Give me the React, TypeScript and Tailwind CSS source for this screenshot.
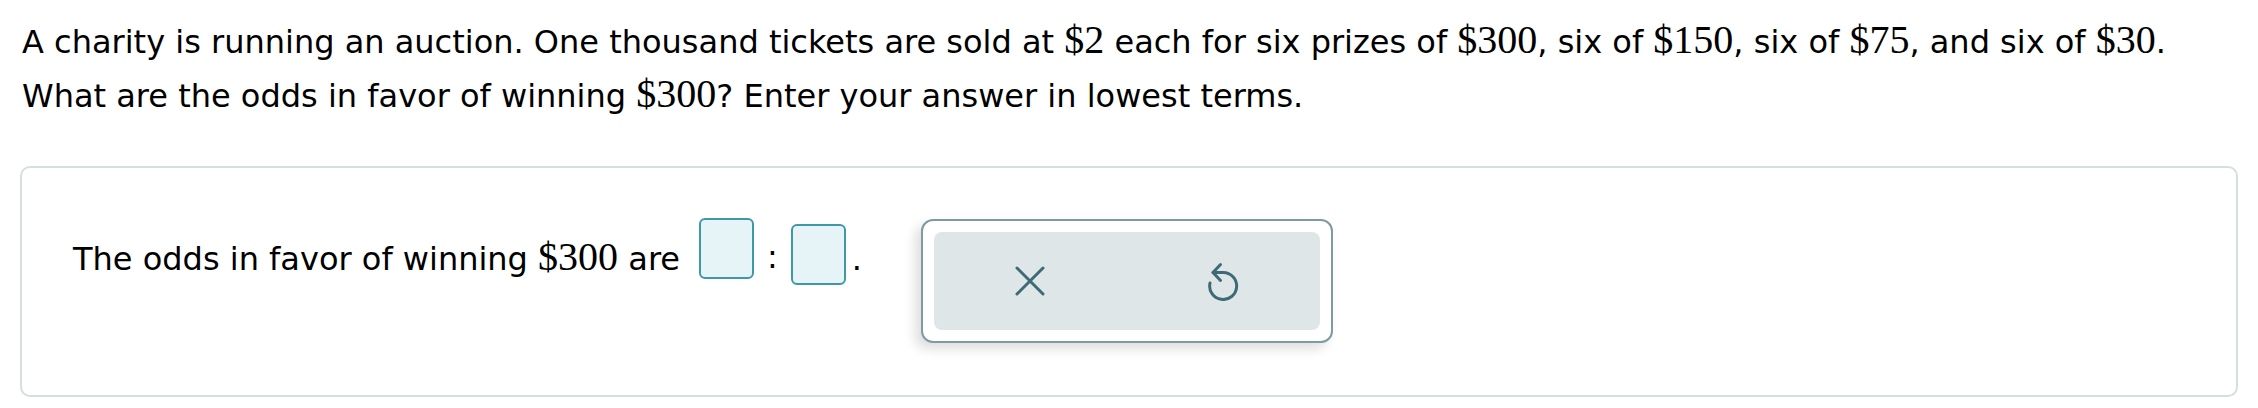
import React from "react";

const M = ({ children }: { children: React.ReactNode }) => (
  <span className="font-['Liberation_Serif',serif] text-[40px] leading-none">{children}</span>
);

const AnswerBox = () => (
  <span className="inline-block w-[55px] h-[61px] rounded-[6px] border-2 border-[#3f98a8] bg-[#e6f4f8]" />
);

const UndoIcon = () => (
  <svg width="40" height="40" viewBox="0 0 40 40" fill="none" stroke="#3e6a76" strokeWidth="3" strokeLinecap="round" strokeLinejoin="round">
    <path d="M7 22 A13.5 13.5 0 1 0 20 11.5 L10 11.5" />
    <path d="M17.5 3.5 L10 11.5 L17.5 19.5" />
  </svg>
);

const CloseIcon = () => (
  <svg width="32" height="32" viewBox="0 0 32 32" fill="none" stroke="#3e6a76" strokeWidth="3" strokeLinecap="round">
    <path d="M3 3 L29 29 M29 3 L3 29" />
  </svg>
);

export default function App() {
  return (
    <div className="w-[2258px] h-[408px] bg-white text-black font-['DejaVu_Sans',sans-serif] text-[32px]">
      {/* question */}
      <div className="px-[22px] pt-[15px] leading-[54px] whitespace-nowrap">
        <div>
          A charity is running an auction. One thousand tickets are sold at <M>$2</M> each for six prizes of{" "}
          <M>$300</M>, six of <M>$150</M>, six of <M>$75</M>, and six of <M>$30</M>.
        </div>
        <div>
          What are the odds in favor of winning <M>$300</M>? Enter your answer in lowest terms.
        </div>
      </div>

      {/* answer panel */}
      <div className="mx-[20px] mt-[43px] h-[231px] rounded-[10px] border-2 border-[#d5dee0] pl-[51px] pt-[51px] flex items-start">
        <div className="flex items-center mt-[5px] h-[61px] whitespace-nowrap">
          <span className="pt-[8px]">
            The odds in favor of winning <M>$300</M> are
          </span>
          <span className="ml-[19px]">
            <AnswerBox />
          </span>
          <span className="mx-[13px] pt-[4px]">:</span>
          <AnswerBox />
          <span className="ml-[6px] pt-[8px]">.</span>
        </div>

        <div className="ml-[59px] w-[412px] h-[124px] rounded-[12px] border-2 border-[#7d9ba3] bg-white p-[11px] shadow-[-6px_6px_12px_rgba(0,0,0,0.13)]">
          <div className="h-full rounded-[8px] bg-[#dfe6e8] grid grid-cols-2">
            <button className="flex items-center justify-center">
              <CloseIcon />
            </button>
            <button className="flex items-center justify-center">
              <UndoIcon />
            </button>
          </div>
        </div>
      </div>
    </div>
  );
}
